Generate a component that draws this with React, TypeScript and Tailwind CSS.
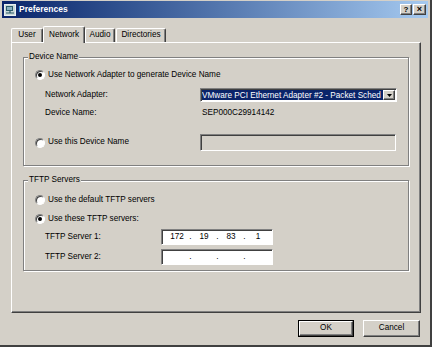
import React from 'react';

const raised =
    'border border-t-white border-l-white border-r-[#404040] border-b-[#404040] shadow-[inset_-1px_-1px_0_#808080]';
const sunken =
    'border border-t-[#808080] border-l-[#808080] border-r-white border-b-white shadow-[inset_1px_1px_0_#404040]';
const etched =
    'border border-[#808080] shadow-[1px_1px_0_#fff,inset_1px_1px_0_#fff]';

const Radio: React.FC<{ checked?: boolean }> = ({ checked }) => (
    <span className="flex h-[10px] w-[10px] shrink-0 items-center justify-center rounded-full border border-t-[#808080] border-l-[#808080] border-r-white border-b-white bg-white shadow-[inset_1px_1px_0_#404040]">
        {checked && <span className="h-[4px] w-[4px] rounded-full bg-black" />}
    </span>
);

const IpBox: React.FC<{ parts: string[] }> = ({ parts }) => (
    <div className={`flex h-[16px] w-[112px] items-center bg-white pl-[3px] ${sunken}`}>
        {parts.map((p, i) => (
            <React.Fragment key={i}>
                <span className="w-[24px] text-center">{p}</span>
                {i < 3 && <span className="w-[3px] text-center">.</span>}
            </React.Fragment>
        ))}
    </div>
);

const Tab: React.FC<{ label: string; w: string; active?: boolean }> = ({ label, w, active }) => (
    <div
        className={`flex items-center justify-center rounded-t-[2px] border border-b-0 border-t-white border-l-white border-r-[#404040] bg-[#d4d0c8] shadow-[inset_-1px_0_0_#808080] ${w} ${
            active ? 'relative z-10 -mb-px h-[17px]' : 'h-[14px]'
        }`}
    >
        {label}
    </div>
);

export default function App() {
    return (
        <div className="flex h-[347px] w-[432px] flex-col border-b-2 border-r-2 border-b-[#404040] border-r-[#404040] bg-[#d4d0c8] px-[2px] pt-px font-['Liberation_Sans',Arial,sans-serif] text-[8.2px] text-black">
            {/* Title bar */}
            <div className="flex h-[17px] items-center bg-gradient-to-r from-[#0a246a] to-[#a6caf0] pl-[2px] pr-[2px]">
                <svg width="12" height="12" viewBox="0 0 12 12" className="shrink-0">
                    <rect x="0.5" y="0.5" width="11" height="11" fill="#c8d8d8" stroke="#e8f0f0" />
                    <rect x="2" y="2" width="7" height="5" fill="#2a5a6a" />
                    <rect x="3" y="3" width="5" height="3" fill="#8ab0c0" />
                    <path d="M2 9h8M6 7v2" stroke="#2a5a6a" strokeWidth="1.2" />
                </svg>
                <span className="ml-[3px] text-[8.5px] font-bold text-white">Preferences</span>
                <div className="ml-auto flex gap-px">
                    <div className={`flex h-[11px] w-[12px] items-center justify-center bg-[#d4d0c8] text-[8px] font-bold leading-none ${raised}`}>
                        ?
                    </div>
                    <div className={`flex h-[11px] w-[13px] items-center justify-center bg-[#d4d0c8] text-[9px] font-bold leading-none ${raised}`}>
                        ×
                    </div>
                </div>
            </div>

            {/* Tabs */}
            <div className="ml-[9px] mt-[7px] flex h-[17px] items-end">
                <Tab label="User" w="w-[32px]" />
                <Tab label="Network" w="w-[42px]" active />
                <Tab label="Audio" w="w-[30px]" />
                <div className="w-px" />
                <Tab label="Directories" w="w-[50px]" />
            </div>

            {/* Panel */}
            <div className={`ml-[9px] flex h-[271px] w-[410px] flex-col px-[11px] pt-[9px] ${raised}`}>
                <fieldset className={`h-[114px] ${etched}`}>
                    <legend className="ml-[4px] bg-[#d4d0c8] px-[1px] leading-[10px]">Device Name</legend>
                    <div className="mt-[6px] flex h-[14px] items-center pl-[11px]">
                        <Radio checked />
                        <span className="ml-[3px]">Use Network Adapter to generate Device Name</span>
                    </div>
                    <div className="mt-[6px] flex h-[14px] items-center pl-[21px]">
                        <span className="w-[155px]">Network Adapter:</span>
                        <div className={`flex h-[14px] w-[197px] items-center bg-white p-px ${sunken}`}>
                            <div className="h-full flex-1 overflow-hidden whitespace-nowrap bg-[#0a246a] leading-[11px] text-white">
                                VMware PCI Ethernet Adapter #2 - Packet Sched
                            </div>
                            <div className={`flex h-full w-[12px] items-center justify-center bg-[#d4d0c8] ${raised}`}>
                                <svg width="5" height="3" viewBox="0 0 5 3">
                                    <path d="M0 0h5L2.5 3z" fill="#000" />
                                </svg>
                            </div>
                        </div>
                    </div>
                    <div className="mt-[5px] flex h-[12px] items-center pl-[21px]">
                        <span className="w-[157px]">Device Name:</span>
                        <span>SEP000C29914142</span>
                    </div>
                    <div className="mt-[15px] flex h-[17px] items-center pl-[11px]">
                        <Radio />
                        <span className="ml-[3px] w-[152px]">Use this Device Name</span>
                        <div className={`h-[17px] w-[196px] bg-[#d4d0c8] ${sunken}`} />
                    </div>
                </fieldset>

                <fieldset className={`mt-[9px] h-[96px] ${etched}`}>
                    <legend className="ml-[4px] bg-[#d4d0c8] px-[1px] leading-[10px]">TFTP Servers</legend>
                    <div className="mt-[8px] flex h-[14px] items-center pl-[11px]">
                        <Radio />
                        <span className="ml-[3px]">Use the default TFTP servers</span>
                    </div>
                    <div className="mt-[5px] flex h-[14px] items-center pl-[11px]">
                        <Radio checked />
                        <span className="ml-[3px]">Use these TFTP servers:</span>
                    </div>
                    <div className="mt-[3px] flex h-[16px] items-center pl-[21px]">
                        <span className="w-[116px]">TFTP Server 1:</span>
                        <IpBox parts={['172', '19', '83', '1']} />
                    </div>
                    <div className="mt-[4px] flex h-[16px] items-center pl-[21px]">
                        <span className="w-[116px]">TFTP Server 2:</span>
                        <IpBox parts={['', '', '', '']} />
                    </div>
                </fieldset>
            </div>

            {/* Buttons */}
            <div className="mt-[7px] flex justify-end gap-[9px] pr-[8px]">
                <div className="border border-black">
                    <div className={`flex h-[15px] w-[54px] items-center justify-center ${raised}`}>OK</div>
                </div>
                <div className={`flex h-[17px] w-[57px] items-center justify-center ${raised}`}>Cancel</div>
            </div>
        </div>
    );
}
